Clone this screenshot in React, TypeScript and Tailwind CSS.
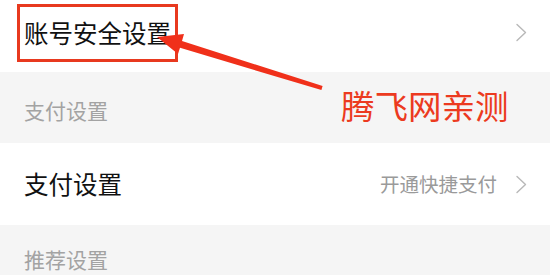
const font = { fontFamily: '"Noto Sans CJK SC", "Noto Sans", sans-serif' };

function Chevron() {
  return (
    <svg width="13" height="19" viewBox="0 0 13 19" fill="none" className="shrink-0">
      <path d="M2 1.5 L10.5 9.5 L2 17.5" stroke="#b8b8b8" strokeWidth="1.4" strokeLinecap="round" strokeLinejoin="round" />
    </svg>
  );
}

export default function App() {
  return (
    <div className="relative w-[550px] h-[275px] overflow-hidden bg-[#f5f5f5]" style={font}>
      {/* account security row */}
      <div className="h-[72px] bg-white flex items-center justify-between pl-6 pr-[22px]">
        <span className="text-[24.5px] leading-none text-[#111] -mt-[6px]">账号安全设置</span>
        <div className="-mt-[8px]">
          <Chevron />
        </div>
      </div>

      {/* section header */}
      <div className="h-[71px] flex items-start pl-6 pt-[28px]">
        <span className="text-[21px] leading-none text-[#a3a3a3]">支付设置</span>
      </div>

      {/* payment row */}
      <div className="h-[82px] bg-white flex items-center justify-between pl-6 pr-[22px]">
        <span className="text-[24.5px] leading-none text-[#111]">支付设置</span>
        <div className="flex items-center gap-[18px]">
          <span className="text-[19.5px] leading-none text-[#9a9a9a]">开通快捷支付</span>
          <Chevron />
        </div>
      </div>

      {/* section header */}
      <div className="flex items-start pl-6 pt-[24px]">
        <span className="text-[21px] leading-none text-[#a3a3a3]">推荐设置</span>
      </div>

      {/* annotation overlay */}
      <div className="absolute left-[17px] top-[4px] w-[161px] h-[58px] border-[3px] border-[#e8391f]" />
      <svg className="absolute left-0 top-0" width="550" height="275" viewBox="0 0 550 275">
        <polygon
          points="157,37 184,34 182,41 322.6,85.9 321.4,90.1 180,47.7 178,54"
          fill="#f0301a"
        />
      </svg>
      <span className="absolute left-[341px] top-[88px] text-[33.5px] leading-none text-[#ec3a20]">腾飞网亲测</span>
    </div>
  );
}
